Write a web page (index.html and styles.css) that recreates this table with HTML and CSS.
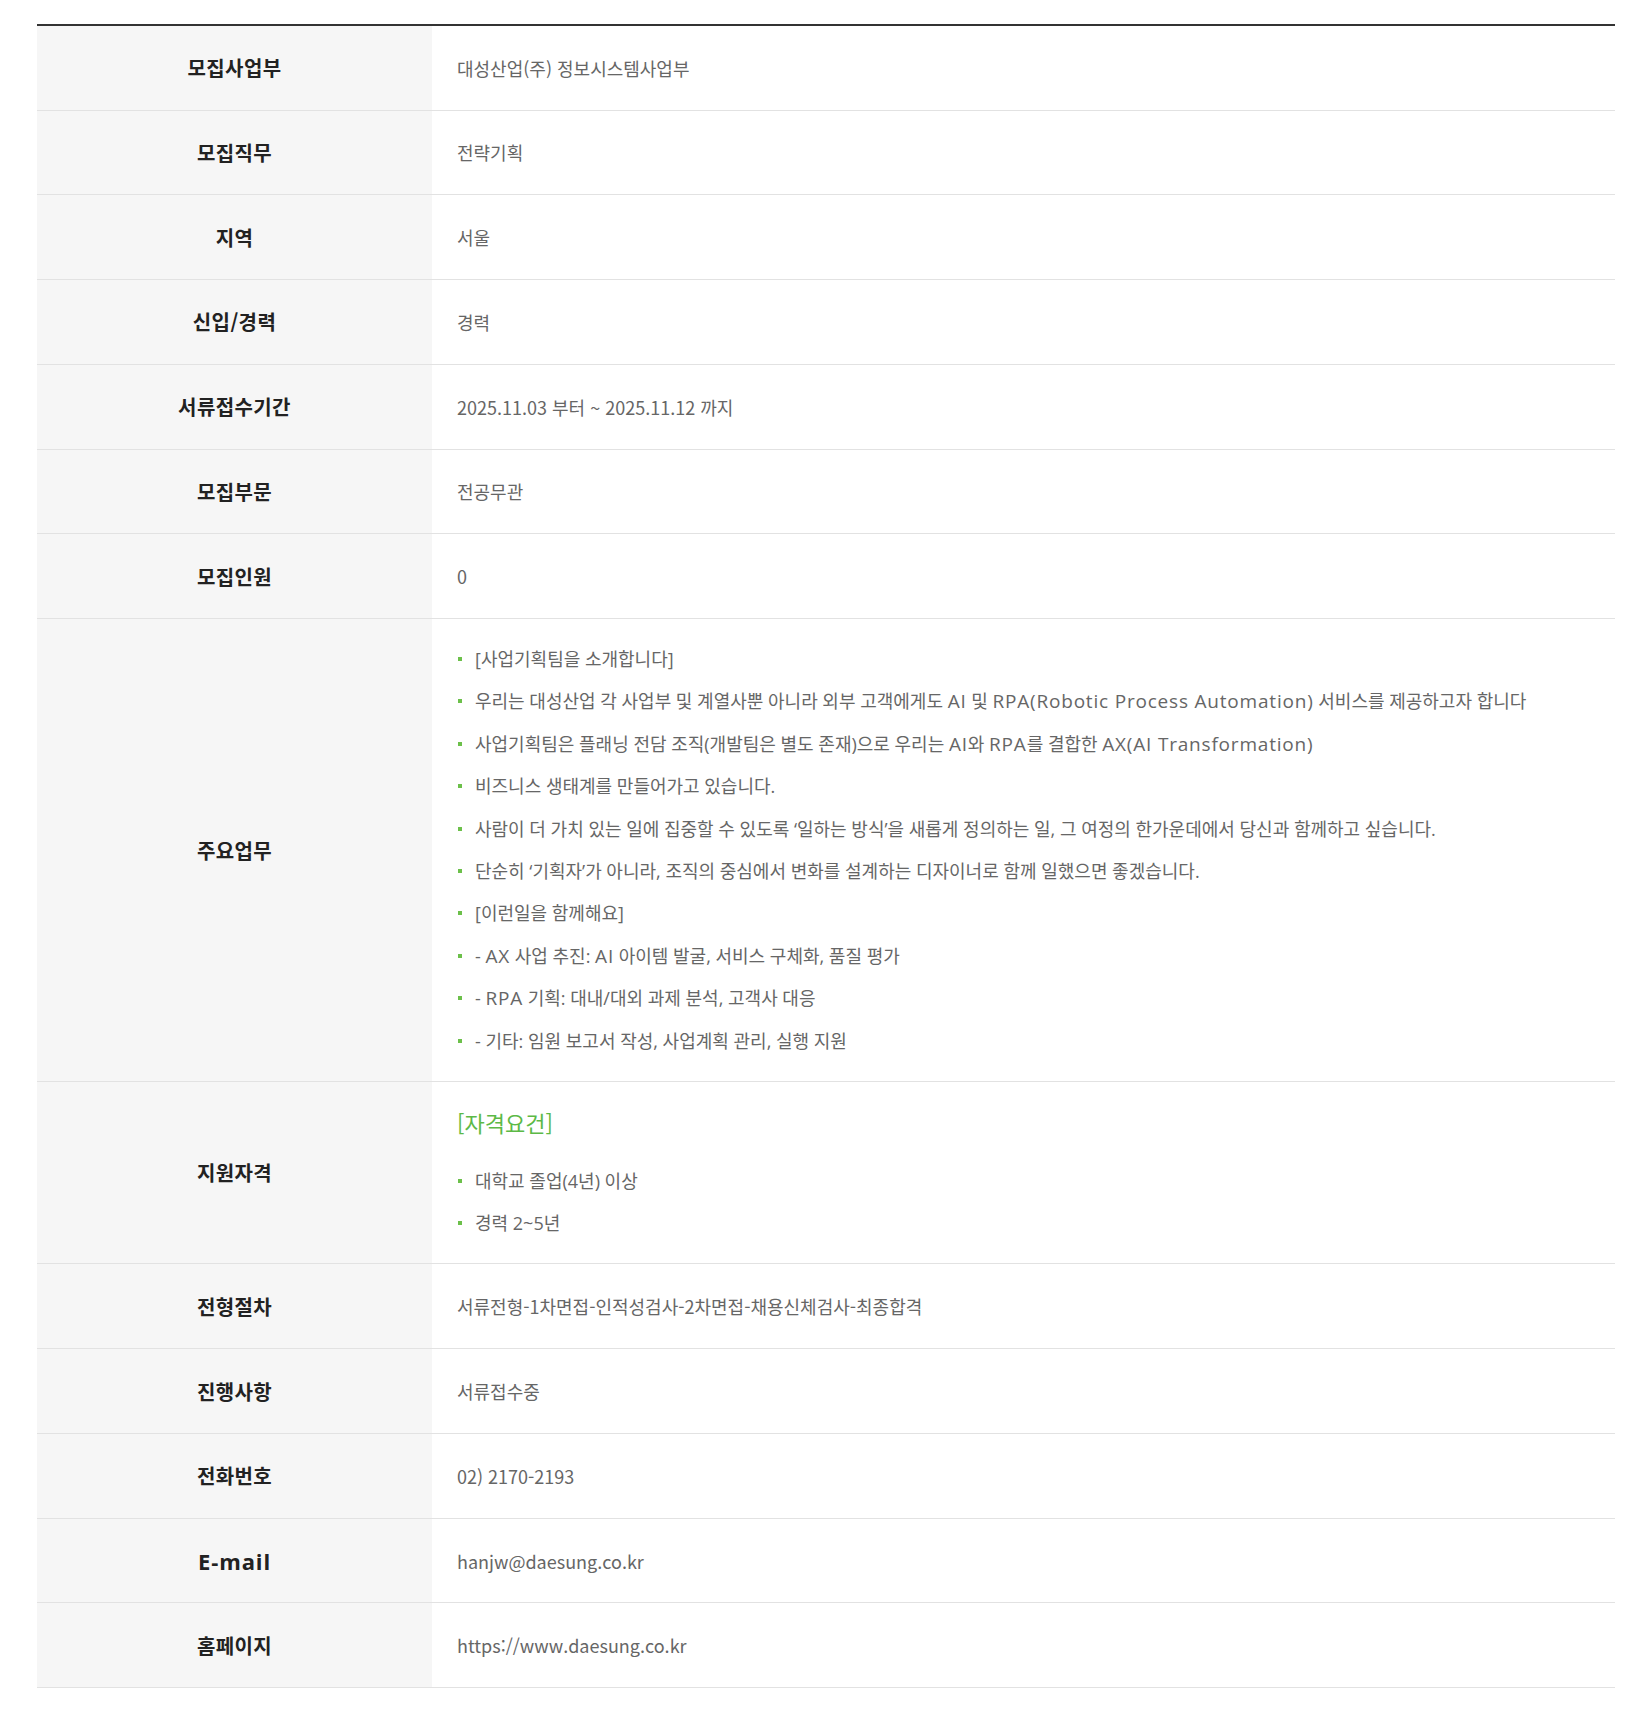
FILE: index.html
```html
<!DOCTYPE html>
<html lang="ko">
<head>
<meta charset="utf-8">
<title>채용정보</title>
<link rel="stylesheet" href="styles.css">
</head>
<body>
<div class="wrap">
<table class="info">
<tbody>
<tr><th>모집사업부</th><td>대성산업(주) 정보시스템사업부</td></tr>
<tr><th>모집직무</th><td>전략기획</td></tr>
<tr><th>지역</th><td>서울</td></tr>
<tr><th>신입/경력</th><td>경력</td></tr>
<tr><th>서류접수기간</th><td>2025.11.03 부터 ~ 2025.11.12 까지</td></tr>
<tr><th>모집부문</th><td>전공무관</td></tr>
<tr><th>모집인원</th><td>0</td></tr>
<tr><th>주요업무</th><td class="block">
<ul class="dots">
<li>[사업기획팀을 소개합니다]</li>
<li>우리는 대성산업 각 사업부 및 계열사뿐 아니라 외부 고객에게도 <span class="en">AI</span> 및 <span class="en">RPA(Robotic Process Automation)</span> 서비스를 제공하고자 합니다</li>
<li>사업기획팀은 플래닝 전담 조직(개발팀은 별도 존재)으로 우리는 <span class="en">AI</span>와 <span class="en">RPA</span>를 결합한 <span class="en">AX(AI Transformation)</span></li>
<li>비즈니스 생태계를 만들어가고 있습니다.</li>
<li>사람이 더 가치 있는 일에 집중할 수 있도록 ‘일하는 방식’을 새롭게 정의하는 일, 그 여정의 한가운데에서 당신과 함께하고 싶습니다.</li>
<li>단순히 ‘기획자’가 아니라, 조직의 중심에서 변화를 설계하는 디자이너로 함께 일했으면 좋겠습니다.</li>
<li>[이런일을 함께해요]</li>
<li>- <span class="en">AX</span> 사업 추진: <span class="en">AI</span> 아이템 발굴, 서비스 구체화, 품질 평가</li>
<li>- <span class="en">RPA</span> 기획: 대내/대외 과제 분석, 고객사 대응</li>
<li>- 기타: 임원 보고서 작성, 사업계획 관리, 실행 지원</li>
</ul>
</td></tr>
<tr><th>지원자격</th><td class="block">
<p class="subhead">[자격요건]</p>
<ul class="dots">
<li>대학교 졸업(4년) 이상</li>
<li>경력 2~5년</li>
</ul>
</td></tr>
<tr><th>전형절차</th><td>서류전형-1차면접-인적성검사-2차면접-채용신체검사-최종합격</td></tr>
<tr><th>진행사항</th><td>서류접수중</td></tr>
<tr><th>전화번호</th><td>02) 2170-2193</td></tr>
<tr><th class="latin">E-mail</th><td>hanjw@daesung.co.kr</td></tr>
<tr><th>홈페이지</th><td>https://www.daesung.co.kr</td></tr>
</tbody>
</table>
</div>
</body>
</html>
```
FILE: styles.css
```css
html, body {
  margin: 0;
  padding: 0;
  background: #fff;
}
body {
  font-family: "Noto Sans CJK KR", "Noto Sans", sans-serif;
}
.wrap {
  width: 1578px;
  margin: 24px 0 0 37px;
}
.info {
  width: 100%;
  border-collapse: collapse;
  border-top: 2px solid #333;
  table-layout: fixed;
}
.info th, .info td {
  border-bottom: 1px solid #e2e2e2;
  height: 84.75px;
  box-sizing: border-box;
  padding: 0 25px;
  vertical-align: middle;
}
.info tr:first-child th, .info tr:first-child td {
  height: 85px;
}
.info th {
  width: 395px;
  background: #f6f6f6;
  color: #222;
  font-size: 20px;
  letter-spacing: 0.4px;
  font-weight: 700;
  text-align: center;
}
.info th.latin {
  font-family: "Open Sans", "Noto Sans CJK KR", sans-serif;
  font-size: 22px;
  letter-spacing: 0.9px;
}
.info td {
  color: #666;
  font-size: 18px;
  font-weight: 400;
  text-align: left;
  letter-spacing: 0;
}
.info td.block {
  padding-top: 19px;
  padding-bottom: 19px;
}
.dots {
  list-style: none;
  margin: 0;
  padding: 0;
}
.dots li {
  position: relative;
  padding-left: 18px;
  line-height: 42.4px;
  font-family: "Open Sans", "Noto Sans CJK KR", sans-serif;
}
.dots li .en {
  font-size: 19px;
  letter-spacing: 0.8px;
}
.dots li::before {
  content: "";
  position: absolute;
  left: 1px;
  top: 19px;
  width: 4px;
  height: 4px;
  background: #6cc04a;
}
.subhead {
  margin: 0 0 16.6px;
  color: #5cb946;
  font-size: 22px;
  line-height: 42px;
}
```
